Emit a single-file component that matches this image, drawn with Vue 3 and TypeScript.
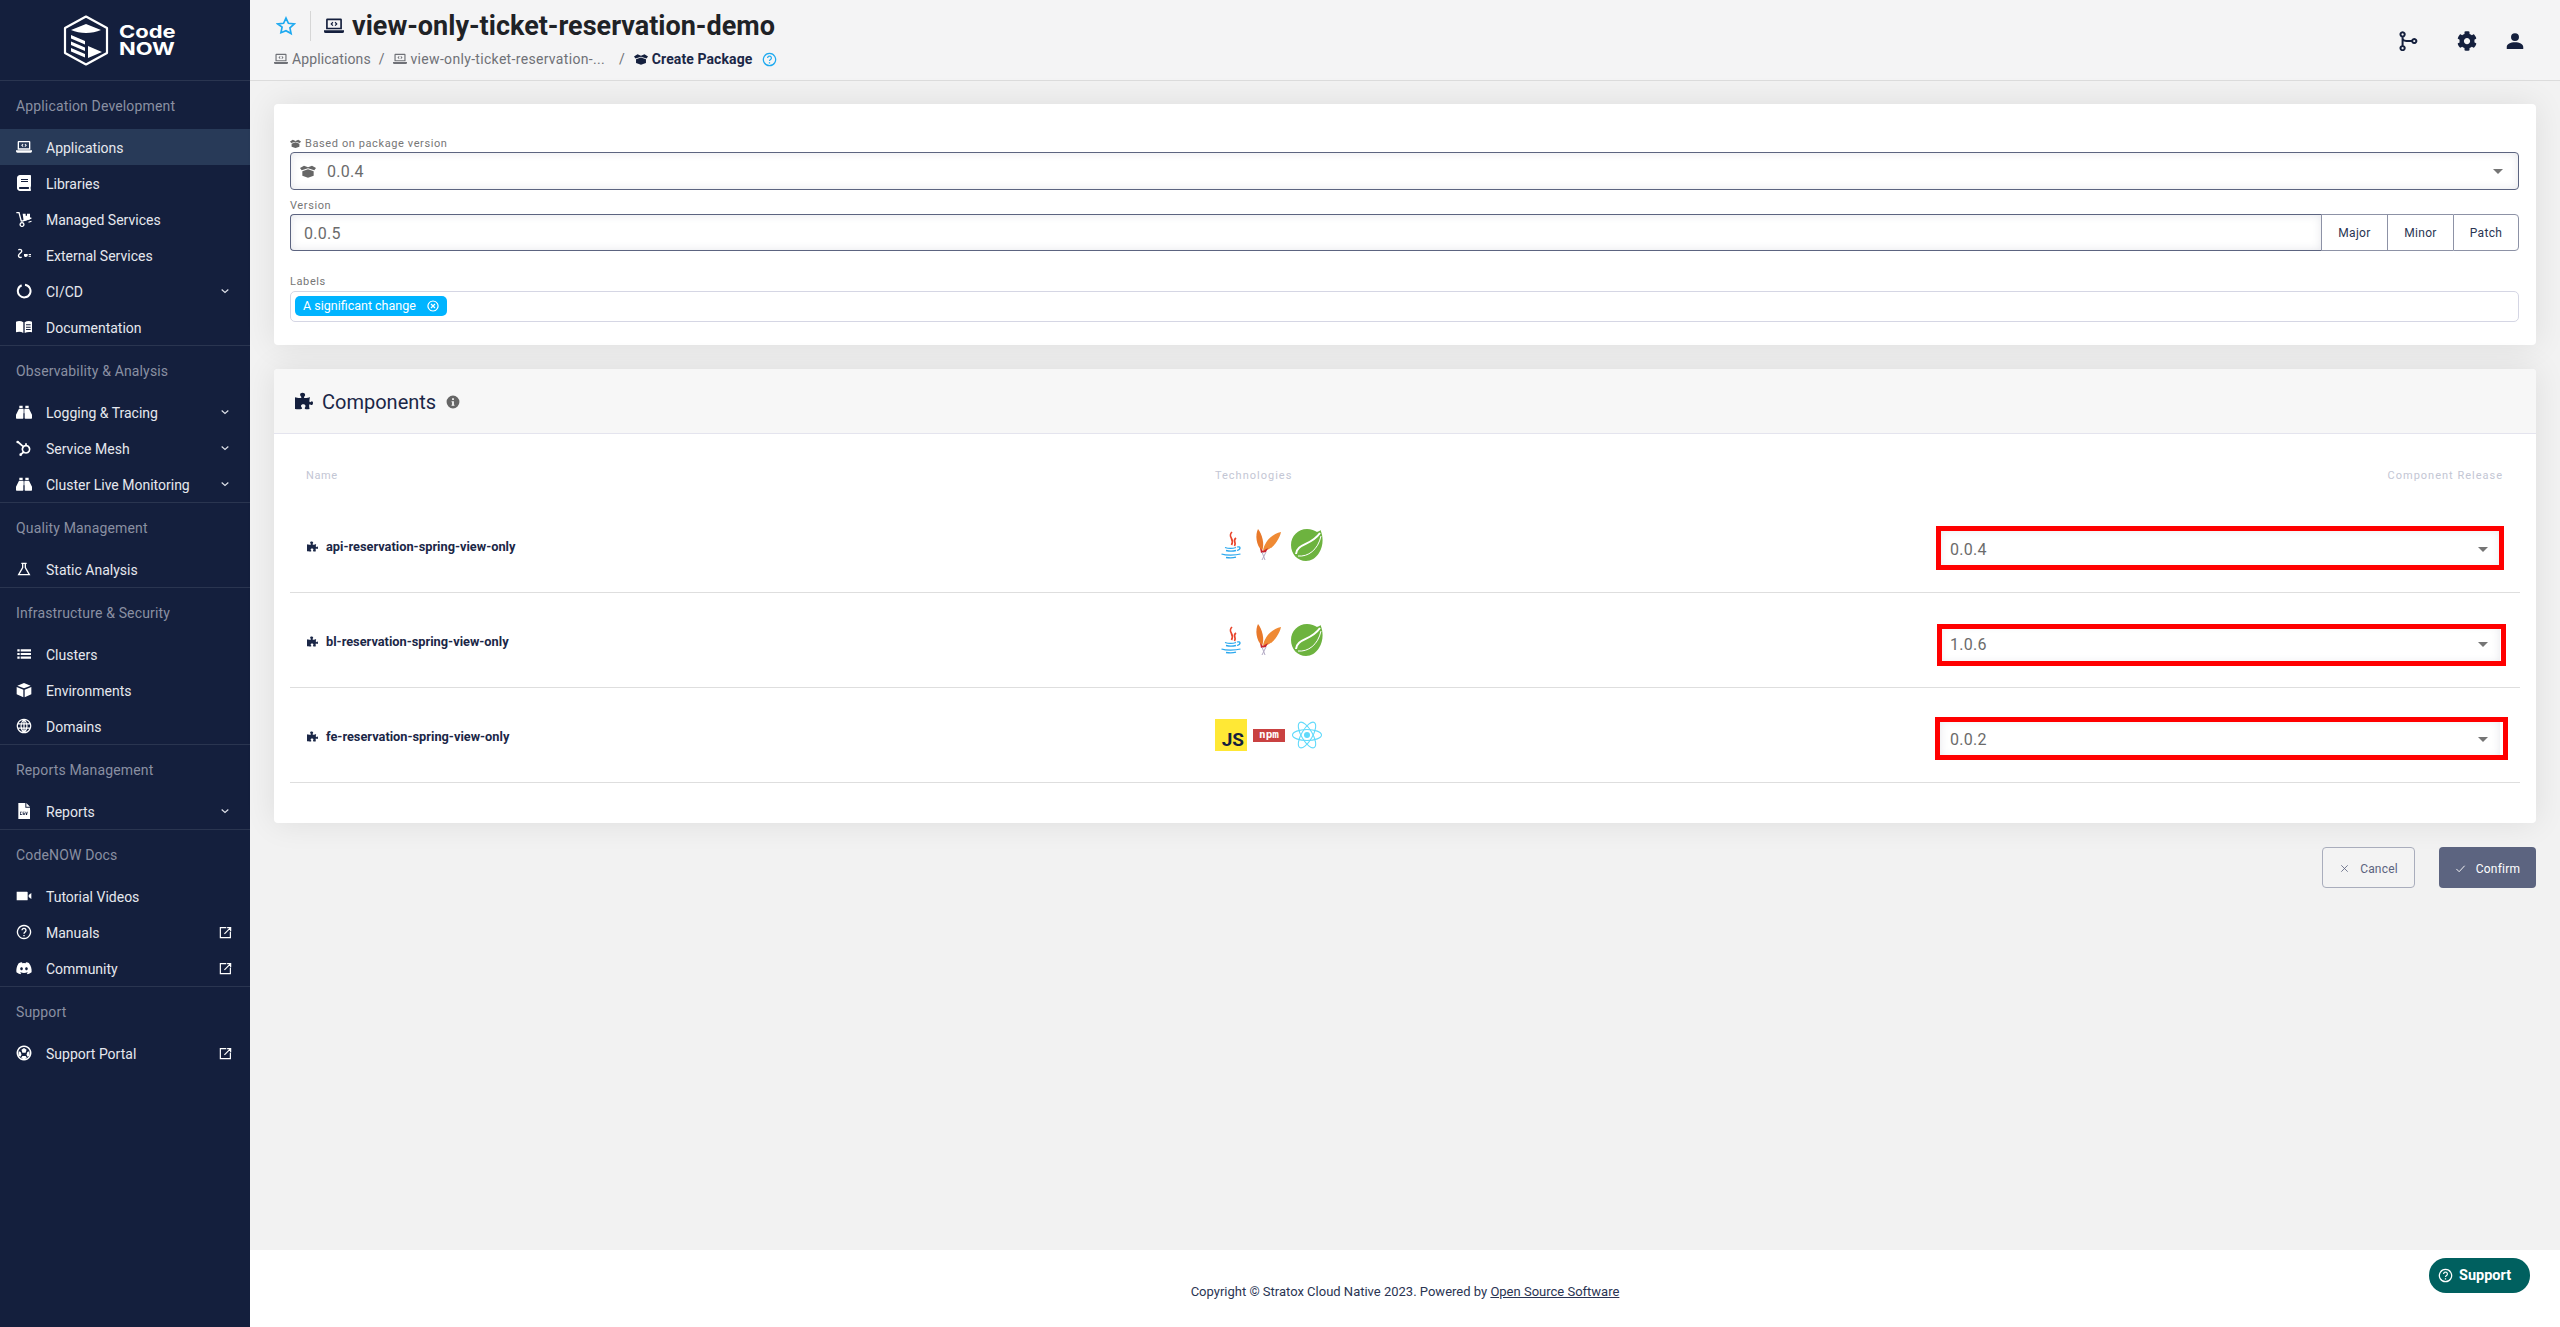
<script setup lang="ts">
import { h } from 'vue'
import type { FunctionalComponent } from 'vue'

type Def = { vb?: string; d?: string; s?: string; w?: number }
const puzzlePath = 'M10 1c2 0 3.500 1.200 3.500 3 0 1.500-1.500 2-1.500 3.200C12 9 18 7.500 20 6.500c-.5 2.500-1.500 7 .2 7 .9 0 1.300-1.300 2.300-1.300 1 0 1.500 1 1.500 2.400 0 1.500-.8 2.800-2 2.800-1 0-1.300-1.200-2.200-1.200-1.500 0-.8 4-.3 6.300-3 .5-6.500 1-6.500-1 0-1 1-1.700 1-3 0-1.600-1.500-2.300-3-2.300s-3 .8-3 2.400c0 1.300 1.500 2 1.500 3 0 1.900-6.500 1.300-9.500.9V7c2.500.6 8.500 2 8.500-.1 0-1-1.700-1.600-1.700-3.400C6.800 2 8.300 1 10 1z'
const defs: Record<string, Def> = {
  laptop: { d: 'M4 3h16a1.500 1.500 0 0 1 1.500 1.500V16h-19V4.500A1.500 1.500 0 0 1 4 3zM4.500 5v9h15V5zM0 17h24v1.500a2 2 0 0 1-2 2H2a2 2 0 0 1-2-2zM10.200 7l1 1-1.500 1.500 1.500 1.500-1 1-2.500-2.500zM13.800 7l2.500 2.500-2.500 2.500-1-1 1.500-1.500-1.500-1.500z' },
  book: { vb: '0 0 448 512', d: 'M448 360V24c0-13.300-10.700-24-24-24H96C43 0 0 43 0 96v320c0 53 43 96 96 96h328c13.300 0 24-10.700 24-24v-16c0-7.500-3.500-14.300-8.900-18.700-4.200-15.400-4.200-59.300 0-74.700 5.400-4.300 8.900-11.100 8.900-18.600zM128 134c0-3.300 2.700-6 6-6h212c3.300 0 6 2.700 6 6v20c0 3.300-2.700 6-6 6H134c-3.300 0-6-2.700-6-6v-20zm0 64c0-3.300 2.700-6 6-6h212c3.300 0 6 2.700 6 6v20c0 3.300-2.700 6-6 6H134c-3.300 0-6-2.700-6-6v-20zm253.400 250H96c-17.700 0-32-14.300-32-32 0-17.600 14.400-32 32-32h285.400c-1.900 17.100-1.900 46.900 0 64z' },
  dolly: { d: 'M10 4h4.500v3h2V4H21v8.500l-9.500 3zM18.500 16l4.500-1.500.5 1.700-4.500 1.500z', s: 'M.5 2.500h4l3.500 13 M8 15.500l15-5 M9 17.500a2.800 2.800 0 1 0 .01 0z', w: 2 },
  plug: { d: 'M12 10.500h5.500v3.500H16v1h-3v-1h-1zM19 10.500h3.500V12H19zM19 13h3.500v1.500H19z', s: 'M3.500 4.500c3-2.500 6.500.5 4.500 3L4.500 11c-2 3 1 6 4 4', w: 2 },
  cicd: { s: 'M13.500 2.700a9.500 9.500 0 1 1-5 .7', w: 3 },
  docs: { d: 'M0 4c4-1.500 8-1 11 1v16c-3-2-7-2.500-11-1zM13 5c3-2 7-2.500 11-1v16c-4-1-8-.5-11 1zM15 8v1.500h7V8zM15 11.500V13h7v-1.500zM15 15v1.500h7V15z' },
  binoculars: { d: 'M5 2.500h5v3.500H5zM14 2.500h5v3.500h-5zM4.500 7H11v14a1 1 0 0 1-1 1H1a1 1 0 0 1-1-1v-5zM13 7h6.500L24 16v5a1 1 0 0 1-1 1h-9a1 1 0 0 1-1-1zM11.500 8h1v6h-1z' },
  mesh: { d: 'M2.500 1a2 2 0 1 1 0 4 2 2 0 0 1 0-4zM7 20a2 2 0 1 1 0 4 2 2 0 0 1 0-4z', s: 'M15 8.500a5.500 5.500 0 1 0 .01 0z M11 10L3 3 M11.500 18L7 22 M15 8.500V5', w: 2.600 },
  flask: { s: 'M8 3.500h8 M10 4v6L4 20.500h16L14 10V4', w: 2 },
  list: { d: 'M2 5h3.500v3.200H2zM7 5h15.500v3.200H7zM2 10.400h3.500v3.200H2zM7 10.400h15.500v3.200H7zM2 15.800h3.500V19H2zM7 15.800h15.500V19H7z' },
  cube: { d: 'M12 1.500L22 5.500 12 9.500 2 5.500zM1 7.500l10 4V23L1 18.500zM23 7.500l-10 4V23l10-4.500z' },
  globe: { s: 'M12 2a10 10 0 1 0 .01 0z M12 2c-6 6-6 14 0 20 M12 2c6 6 6 14 0 20 M2.500 8.800h19 M2.500 15.200h19 M12 2v20', w: 1.800 },
  csv: { d: 'M3.500 0H14v7h7v17H3.500zM15.500 0L21 5.500h-5.500zM6 13v5h3v-1H7v-3h2v-1zM10 13v3h2v1h-2v1h3v-3h-2v-1h2v-1zM14 13l1 5h1.500l1-5h-1l-.7 3-.7-3z' },
  video: { d: 'M1 5.500h15.500a1 1 0 0 1 1 1v11a1 1 0 0 1-1 1H1zM19 10.500l4-3v9l-4-3z' },
  help: { s: 'M12 2.200a9.800 9.800 0 1 0 .01 0z M9 9.500a3 3 0 1 1 4.500 2.600c-1 .6-1.500 1.200-1.500 2.400 M12 16.500v2', w: 2 },
  discord: { d: 'M20 5c-1.600-.8-3.200-1.300-5-1.500l-.6 1.200a17 17 0 0 0-4.800 0L9 3.500C7.200 3.700 5.600 4.200 4 5 1 9.600.2 14 .6 18.400c2 1.500 4 2.400 6 3l1.300-2c-.7-.3-1.400-.6-2-1l.5-.4a13 13 0 0 0 11.200 0l.5.4c-.6.4-1.300.7-2 1l1.300 2c2-.6 4-1.500 6-3 .5-5-.8-9.400-3.900-13.400zM8.300 15.500c-1.100 0-2-1-2-2.300s.9-2.300 2-2.300 2 1 2 2.300-.9 2.300-2 2.300zM15.700 15.500c-1.100 0-2-1-2-2.300s.9-2.300 2-2.300 2 1 2 2.300-.9 2.300-2 2.300z' },
  ball: { d: 'M12 4.500l3.800 2.800-1.400 4.400H9.600L8.200 7.300zM4 9.500l3 1 1.300 4.200-1.700 2.800-3.300-1.500zM20 9.500l-3 1-1.300 4.200 1.700 2.800 3.300-1.500zM9.500 16.500h5l2 3.500-4.500 1.500L7.500 20z', s: 'M12 2a10 10 0 1 0 .01 0z', w: 2.200 },
  external: { s: 'M21 10.500V21.500H2.500V3H13.500 M10 14.500L21 3.500 M15 3h6.500v6.500', w: 2.200 },
  chevron: { s: 'M4 8.500l8 7 8-7', w: 2.800 },
  star: { s: 'M12 2.500l2.900 6.300 6.900.8-5.100 4.700 1.400 6.800L12 17.600l-6.100 2.500 1.400-6.800L2.200 9.600l6.900-.8z', w: 2 },
  box: { d: 'M0 7.500L6 4l6 2.500L18 4l6 3.500-2.500 3.500L12 8 2.500 11zM3.500 12.500L12 9.500l8.500 3V19L12 22l-8.500-3z' },
  branch: { s: 'M5.500 1.500a2.500 2.500 0 1 0 .01 0z M5.500 18a2.500 2.500 0 1 0 .01 0z M19.500 9.500a2.500 2.500 0 1 0 .01 0z M5.500 6.500V18 M5.500 9.500c1 2 3 2.500 5 2.500h6.500', w: 2.400 },
  cog: { vb: '0 0 512 512', d: 'M487.400 315.700l-42.600-24.600c4.300-23.200 4.300-47 0-70.200l42.600-24.600c4.900-2.800 7.100-8.600 5.500-14-11.100-35.600-30-67.800-54.700-94.600-3.800-4.100-10-5.100-14.800-2.300L380.800 110c-17.900-15.400-38.500-27.300-60.800-35.100V25.800c0-5.600-3.900-10.500-9.400-11.700-36.700-8.200-74.300-7.800-109.200 0-5.500 1.200-9.400 6.100-9.400 11.700V75c-22.200 7.900-42.800 19.800-60.800 35.100L88.700 85.500c-4.900-2.800-11-1.900-14.800 2.300-24.700 26.700-43.600 58.900-54.700 94.600-1.700 5.400.6 11.200 5.500 14L67.300 221c-4.300 23.200-4.300 47 0 70.200l-42.600 24.600c-4.900 2.800-7.100 8.600-5.500 14 11.100 35.600 30 67.800 54.700 94.600 3.800 4.100 10 5.100 14.800 2.300l42.600-24.600c17.900 15.400 38.500 27.300 60.800 35.100v49.200c0 5.600 3.900 10.500 9.400 11.700 36.700 8.200 74.300 7.800 109.200 0 5.500-1.200 9.400-6.100 9.400-11.700v-49.200c22.200-7.900 42.800-19.800 60.800-35.100l42.600 24.600c4.900 2.800 11 1.900 14.800-2.300 24.700-26.700 43.600-58.900 54.700-94.600 1.500-5.500-.7-11.300-5.600-14.100zM256 336c-44.100 0-80-35.900-80-80s35.900-80 80-80 80 35.900 80 80-35.900 80-80 80z' },
  user: { d: 'M12 1.500a5.300 5.300 0 1 1 0 10.600 5.300 5.300 0 0 1 0-10.600zM1 20c0-4 5-6.500 11-6.500S23 16 23 20v2.500H1z' },
  puzzle: { d: puzzlePath },
  info: { d: 'M12 1a11 11 0 1 1 0 22 11 11 0 0 1 0-22zM10.500 5.500v3h3v-3zM9.500 10.500v2h1v4h-1v2h5v-2h-1v-6z' },
  times: { s: 'M5 5l14 14 M19 5L5 19', w: 1.800 },
  check: { s: 'M3 13l6 6L21 6', w: 2 },
  timesCircle: { s: 'M12 2a10 10 0 1 0 .01 0z M8 8l8 8 M16 8l-8 8', w: 2.400 },
}

const Ico: FunctionalComponent<{ n: string }> = (p) => {
  const def = defs[p.n]
  const kids = []
  if (def.d) kids.push(h('path', { d: def.d, fill: 'currentColor', 'fill-rule': 'evenodd' }))
  if (def.s) kids.push(h('path', { d: def.s, fill: 'none', stroke: 'currentColor', 'stroke-width': def.w ?? 2 }))
  return h('svg', { viewBox: def.vb ?? '0 0 24 24' }, kids)
}
Ico.props = ['n']

type Item = { label: string; icon: string; chevron?: boolean; external?: boolean; active?: boolean }
const groups: { title: string; items: Item[] }[] = [
  { title: 'Application Development', items: [
    { label: 'Applications', icon: 'laptop', active: true },
    { label: 'Libraries', icon: 'book' },
    { label: 'Managed Services', icon: 'dolly' },
    { label: 'External Services', icon: 'plug' },
    { label: 'CI/CD', icon: 'cicd', chevron: true },
    { label: 'Documentation', icon: 'docs' },
  ] },
  { title: 'Observability & Analysis', items: [
    { label: 'Logging & Tracing', icon: 'binoculars', chevron: true },
    { label: 'Service Mesh', icon: 'mesh', chevron: true },
    { label: 'Cluster Live Monitoring', icon: 'binoculars', chevron: true },
  ] },
  { title: 'Quality Management', items: [{ label: 'Static Analysis', icon: 'flask' }] },
  { title: 'Infrastructure & Security', items: [
    { label: 'Clusters', icon: 'list' },
    { label: 'Environments', icon: 'cube' },
    { label: 'Domains', icon: 'globe' },
  ] },
  { title: 'Reports Management', items: [{ label: 'Reports', icon: 'csv', chevron: true }] },
  { title: 'CodeNOW Docs', items: [
    { label: 'Tutorial Videos', icon: 'video' },
    { label: 'Manuals', icon: 'help', external: true },
    { label: 'Community', icon: 'discord', external: true },
  ] },
  { title: 'Support', items: [{ label: 'Support Portal', icon: 'ball', external: true }] },
]

const rows = [
  { name: 'api-reservation-spring-view-only', kind: 'java', version: '0.0.4', mark: { top: '-4px', left: '-4px', right: '-4px', bottom: '-2px' } },
  { name: 'bl-reservation-spring-view-only', kind: 'java', version: '1.0.6', mark: { top: '-1px', left: '-3px', right: '-6px', bottom: '-3px' } },
  { name: 'fe-reservation-spring-view-only', kind: 'js', version: '0.0.2', mark: { top: '-3px', left: '-5px', right: '-8px', bottom: '-2px' } },
]
</script>

<template>
  <div class="app">
    <aside class="side">
      <div class="brand">
        <svg class="logo" viewBox="0 0 46 51">
          <path d="M23 1.500L44 13v25L23 49.500 2 38V13z" fill="none" stroke="#fff" stroke-width="2.200" stroke-linejoin="round" />
          <path d="M8 15L23 9l15 6c-9 4-21 4-30 0zM8 20l14 6v3.500L8 23.500zM8 26.500l14 6V36L8 30zM8 33l14 6v3.500L8 36.500zM25 31l14 6-14 6z" fill="#fff" />
        </svg>
        <div class="wordmark"><span>Code</span><span>NOW</span></div>
      </div>
      <section v-for="g in groups" :key="g.title" class="group">
        <div class="group-title">{{ g.title }}</div>
        <a v-for="it in g.items" :key="it.label" class="item" :class="{ active: it.active }">
          <Ico :n="it.icon" class="item-ico" />
          <span class="item-label">{{ it.label }}</span>
          <Ico v-if="it.chevron" n="chevron" class="chev" />
          <Ico v-if="it.external" n="external" class="ext" />
        </a>
      </section>
    </aside>

    <div class="main">
      <header class="top">
        <div class="top-left">
          <div class="title-row">
            <Ico n="star" class="star" />
            <span class="divider"></span>
            <Ico n="laptop" class="title-ico" />
            <h1>view-only-ticket-reservation-demo</h1>
          </div>
          <nav class="crumbs">
            <Ico n="laptop" class="crumb-ico" /><span class="c1">Applications</span>
            <span class="slash s1">/</span>
            <Ico n="laptop" class="crumb-ico" /><span class="c2">view-only-ticket-reservation-...</span>
            <span class="slash s2">/</span>
            <Ico n="box" class="crumb-ico dark" /><b>Create Package</b>
            <Ico n="help" class="crumb-help" />
          </nav>
        </div>
        <div class="top-right">
          <Ico n="branch" class="t-branch" />
          <Ico n="cog" class="t-cog" />
          <Ico n="user" class="t-user" />
        </div>
      </header>

      <main class="content">
        <section class="card form">
          <label class="lbl lbl-b"><Ico n="box" class="lbl-ico" />Based on package version</label>
          <div class="field sel">
            <Ico n="box" class="sel-ico" />
            <span class="val">0.0.4</span>
            <i class="caret"></i>
          </div>
          <label class="lbl lbl-v">Version</label>
          <div class="version">
            <div class="field ver-input"><span class="val">0.0.5</span></div>
            <button class="vbtn">Major</button>
            <button class="vbtn">Minor</button>
            <button class="vbtn">Patch</button>
          </div>
          <label class="lbl lbl-l">Labels</label>
          <div class="labels">
            <span class="chip">A significant change<Ico n="timesCircle" class="chip-x" /></span>
          </div>
        </section>

        <section class="card comps">
          <div class="comps-head">
            <Ico n="puzzle" class="head-ico" />
            <h2>Components</h2>
            <Ico n="info" class="head-info" />
          </div>
          <div class="table">
            <div class="t-row t-headrow">
              <span class="th th-name">Name</span>
              <span class="th">Technologies</span>
              <span class="th th-r">Component Release</span>
            </div>
            <div v-for="r in rows" :key="r.name" class="t-row t-body">
              <div class="name"><Ico n="puzzle" class="name-ico" />{{ r.name }}</div>
              <div class="tech">
                <template v-if="r.kind === 'java'">
                  <svg class="logo32" viewBox="0 0 32 32">
                    <path d="M17 3c-5 5 3 6-.5 13M21 9c-4 3 1 4-1.500 8" fill="none" stroke="#e8432a" stroke-width="1.700" />
                    <path d="M10 18.500c3 1 8 1 11 0M11 21.500c3 .8 7 .8 10 0M6.500 25c4 1.500 14 1.500 19 0M11 28.500c3 .6 7 .6 10-.3M22 18c3.500-1 4.500 2 0 3.500" fill="none" stroke="#2ba8ee" stroke-width="1.300" />
                  </svg>
                  <svg class="logo32" viewBox="0 0 32 32">
                    <path d="M5 0C2 6 3 16 9 22 12 15 9 5 5 0z" fill="#e8792b" />
                    <path d="M28 3C20 4 11 13 10 22 18 22 26 12 28 3z" fill="#ef8a34" />
                    <path d="M7 19l3 3 5-3-2 4-5 1z" fill="#c8242f" />
                    <path d="M9 23l3 8M13 23l-4 8" stroke="#b2a9c4" stroke-width="1" fill="none" />
                  </svg>
                  <svg class="logo32" viewBox="0 0 32 32">
                    <path d="M16 0c4 0 8 1.500 10 3 1.500-.5 2.500-1 3.500-2 3 7 3 16-1.500 23-3 5-8 8-13 8C6.500 32 0 25 0 16S7 0 16 0z" fill="#6db33f" />
                    <path d="M5 25C6 14 20 17 29 4" fill="none" stroke="#fff" stroke-width="2" />
                    <path d="M7 27c10 1 20-6 23-20" fill="none" stroke="#fff" stroke-width="1" />
                  </svg>
                </template>
                <template v-else>
                  <div class="js"><span>JS</span></div>
                  <div class="npm"><span>npm</span></div>
                  <svg class="logo32" viewBox="0 0 32 32">
                    <g fill="none" stroke="#61dafb" stroke-width="1.100">
                      <ellipse cx="16" cy="16" rx="14.500" ry="5.500" />
                      <ellipse cx="16" cy="16" rx="14.500" ry="5.500" transform="rotate(60 16 16)" />
                      <ellipse cx="16" cy="16" rx="14.500" ry="5.500" transform="rotate(120 16 16)" />
                    </g>
                    <circle cx="16" cy="16" r="3" fill="#61dafb" />
                  </svg>
                </template>
              </div>
              <div class="release">
                <div class="rel-sel">
                  <span class="val">{{ r.version }}</span>
                  <i class="caret"></i>
                  <span class="mark" :style="r.mark"></span>
                </div>
              </div>
            </div>
          </div>
        </section>

        <div class="actions">
          <button class="btn cancel"><Ico n="times" class="btn-ico" />Cancel</button>
          <button class="btn confirm"><Ico n="check" class="btn-ico" />Confirm</button>
        </div>
      </main>

      <footer class="foot">
        <span>Copyright © Stratox Cloud Native 2023. Powered by <u>Open Source Software</u></span>
      </footer>
      <button class="support"><Ico n="help" class="sup-ico" />Support</button>
    </div>
  </div>
</template>

<style scoped>
.app { display: flex; min-height: 1327px; font-family: "Roboto", "Noto Sans", sans-serif; color: #141f3d; background: #f2f2f2; }
.side { width: 250px; flex: none; background: #141f3d; color: #fff; }
.brand { display: flex; align-items: center; padding-left: 63px; gap: 10px; box-sizing: border-box; border-bottom: 1px solid #2a3550; height: 81px; }
.logo { width: 46px; height: 51px; }
.wordmark { display: flex; flex-direction: column; font-family: "Inter", sans-serif; font-weight: 700; font-size: 18px; line-height: 17px; }
.wordmark span { display: block; transform: scaleX(1.22); transform-origin: left center; }
.group { border-bottom: 1px solid #2a3550; }
.group:last-child { border-bottom: 0; }
.group-title { height: 48px; line-height: 50px; padding-left: 16px; font-size: 14px; letter-spacing: 0.15px; color: #8a90a2; }
.item { height: 36px; display: flex; align-items: center; padding: 0 18px 0 16px; color: #e6e8ee; font-size: 14px; }
.item.active { background: #283a58; }
.item-ico { width: 16px; height: 16px; flex: none; color: #fff; }
.item-label { margin-left: 14px; flex: 1; padding-top: 1px; }
.chev { width: 10px; height: 10px; margin-right: 2px; color: #dfe2ea; }
.ext { width: 13px; height: 13px; color: #fff; }
.main { flex: 1; min-width: 0; display: flex; flex-direction: column; position: relative; }
.top { height: 80px; border-bottom: 1px solid #dcdcdc; background: #f4f4f5; display: flex; justify-content: space-between; padding: 0 0 0 24px; }
.title-row { display: flex; align-items: center; height: 30px; margin-top: 11px; margin-left: 2px; }
.star { width: 20px; height: 20px; color: #1da9f0; }
.divider { width: 1px; height: 30px; background: #d6d6d6; margin: 0 13px 0 14px; }
.title-ico { width: 20px; height: 20px; color: #141f3d; margin-right: 8px; }
h1 { margin: 0; font-size: 27px; line-height: 30px; font-weight: 700; color: #1f2226; }
.crumbs { display: flex; align-items: center; height: 16px; margin-top: 10px; font-size: 14px; color: #6f7177; }
.crumb-ico { width: 14px; height: 14px; margin-right: 4px; color: #6f7177; }
.crumb-ico.dark { color: #141f3d; }
.c1 { white-space: nowrap; letter-spacing: 0.1px; }
.c2 { white-space: nowrap; letter-spacing: 0.32px; }
.slash { margin: 0 8px; }
.s2 { margin: 0 9px 0 14px; }
.crumbs b { font-weight: 700; color: #1b2747; letter-spacing: 0.1px; }
.crumb-help { width: 15px; height: 15px; margin-left: 10px; color: #1da9f0; }
.top-right { display: flex; align-items: center; padding: 2px 36px 0 0; height: 78px; }
.t-branch { width: 20px; height: 20px; margin-right: 39px; }
.t-cog { width: 20px; height: 20px; margin-right: 29px; }
.t-user { width: 18px; height: 18px; }
.top-right svg { color: #141f3d; }
.content { flex: 1; padding: 23px 24px 24px; }
.card { background: #fff; border-radius: 4px; box-shadow: 0 0 32px rgba(0, 0, 0, 0.09); }
.form { padding: 32px 17px 23px 16px; }
.lbl { display: flex; align-items: center; height: 16px; box-sizing: border-box; font-size: 11px; letter-spacing: 0.6px; color: #767676; }
.lbl-b { padding-bottom: 2px; }
.lbl-ico { width: 11px; height: 11px; margin-right: 4px; color: #666; }
.lbl-v { margin-top: 7px; height: 17px; }
.lbl-l { margin-top: 22px; height: 18px; padding-bottom: 1px; }
.field { box-sizing: border-box; border: 1px solid #5c6480; background: #fff; box-shadow: inset 0 0 8px rgba(92, 100, 128, 0.16); display: flex; align-items: center; position: relative; }
.sel { height: 38px; border-radius: 4px; padding-left: 9px; }
.sel-ico { width: 16px; height: 16px; color: #666; margin-right: 11px; }
.val { font-size: 16px; color: #6b6b6b; letter-spacing: 0.3px; }
.caret { position: absolute; right: 15px; top: 50%; margin-top: -2px; width: 0; height: 0; border-left: 5px solid transparent; border-right: 5px solid transparent; border-top: 5px solid #757575; }
.version { display: flex; height: 37px; }
.ver-input { flex: 1; border-radius: 4px 0 0 4px; padding: 1px 0 0 13px; border-right: 0; }
.vbtn { width: 66px; box-sizing: border-box; border: 1px solid #8d92a6; border-right: 0; background: #fff; font-family: inherit; font-size: 12px; color: #2a3553; padding: 0; letter-spacing: 0.3px; }
.vbtn:last-child { border-right: 1px solid #8d92a6; border-radius: 0 4px 4px 0; }
.labels { height: 31px; box-sizing: border-box; border: 1px solid #d5d6e4; border-radius: 5px; display: flex; align-items: center; padding: 0 0 2px 4px; }
.chip { display: inline-flex; align-items: center; height: 20px; box-sizing: border-box; padding: 0 8px; background: #00b4ff; color: #fff; font-size: 12.500px; border-radius: 5px; width: 152px; justify-content: space-between; }
.chip-x { width: 12px; height: 12px; }
.comps { margin-top: 24px; height: 454px; box-sizing: border-box; }
.comps-head { height: 65px; box-sizing: border-box; background: #f7f7f7; border-bottom: 1px solid #e4e4ee; border-radius: 4px 4px 0 0; display: flex; align-items: center; padding-left: 21px; }
.head-ico { width: 18px; height: 18px; }
h2 { margin: 2px 0 0 9px; font-size: 20px; font-weight: 400; color: #1b2747; }
.head-info { width: 14px; height: 14px; margin: 2px 0 0 10px; color: #666; }
.table { margin: 0 16px; }
.t-row { display: grid; grid-template-columns: 925px 1fr 584px; }
.t-headrow { height: 64px; box-sizing: border-box; padding-top: 34px; }
.th { font-size: 11px; line-height: 16px; color: #c3c6d4; letter-spacing: 1px; }
.th-name { padding-left: 16px; letter-spacing: 0.6px; }
.th-r { text-align: right; padding-right: 17px; }
.t-body { height: 95px; box-sizing: border-box; border-bottom: 1px solid #dedede; align-items: center; }
.name { padding: 2px 0 0 17px; display: flex; align-items: center; font-size: 12.800px; font-weight: 700; color: #1b2747; }
.name-ico { width: 11px; height: 11px; margin-right: 8px; }
.tech { display: flex; gap: 6px; align-items: center; }
.logo32 { width: 32px; height: 32px; }
.js { width: 32px; height: 32px; background: #ffe835; position: relative; }
.js span { position: absolute; right: 3px; bottom: 0; font-size: 19px; font-weight: 700; color: #141f3d; line-height: 22px; }
.npm { width: 32px; height: 13px; background: #c94141; color: #fff; font-family: "DejaVu Sans Mono", monospace; font-size: 11px; font-weight: 700; line-height: 12px; text-align: center; }
.release { padding: 8px 20px 0 4px; }
.rel-sel { height: 38px; position: relative; display: flex; align-items: center; padding-left: 10px; background: #fff; box-shadow: inset 0 0 8px rgba(92, 100, 128, 0.16); }
.mark { position: absolute; border: 5px solid #ff0000; pointer-events: none; }
.rel-sel .caret { right: 12px; }
.actions { display: flex; justify-content: flex-end; gap: 24px; margin-top: 24px; }
.btn { height: 41px; border-radius: 4px; font-family: inherit; font-size: 12px; display: inline-flex; align-items: center; justify-content: center; padding: 2px 0 0; letter-spacing: 0.2px; }
.btn-ico { width: 11px; height: 11px; margin-right: 10px; }
.cancel { width: 93px; border: 1px solid #a9adbc; background: #f3f3f3; color: #5c6480; }
.confirm { width: 97px; border: 0; background: #5c6480; color: #fff; }
.foot { height: 77px; background: #fff; display: flex; justify-content: center; align-items: center; padding-top: 6px; box-sizing: border-box; font-size: 13px; color: #2a3553; }
.support { position: absolute; right: 30px; bottom: 34px; width: 101px; height: 35px; border: 0; border-radius: 17px; background: #00605f; color: #fff; font-family: inherit; font-size: 14.500px; font-weight: 700; display: flex; align-items: center; padding: 0 0 0 9px; }
.sup-ico { width: 15px; height: 15px; margin-right: 6px; }
</style>

<style>
html, body { margin: 0; background: #f2f2f2; }
</style>
